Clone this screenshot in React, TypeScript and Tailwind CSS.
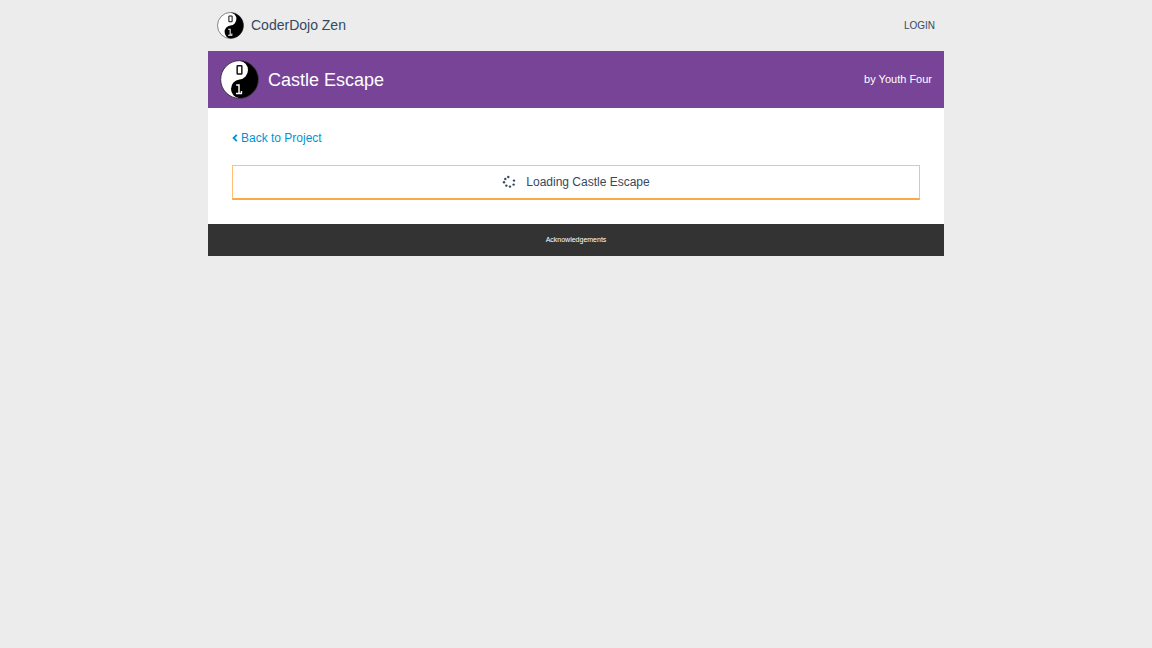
import React from "react";

function YinYang({ className }: { className: string }) {
  return (
    <svg viewBox="0 0 40 40" className={className} aria-hidden="true">
      <circle cx="20" cy="20" r="19.3" fill="#fff" />
      <path
        d="M20 .7a19.3 19.3 0 0 1 0 38.6a9.7 9.7 0 0 1 0-19.3a9.7 9.7 0 0 0 0-19.3z"
        fill="#000"
      />
      <circle cx="20" cy="20" r="19.3" fill="none" stroke="#222" strokeWidth=".8" />
      <rect x="17.6" y="5.8" width="4.8" height="8.6" rx=".6" fill="none" stroke="#111" strokeWidth="1.5" />
      <path d="M16.6 25.7h2.9v8.4M16.4 34.4h5.6v-2.6" fill="none" stroke="#fff" strokeWidth="1.5" />
    </svg>
  );
}

function Chevron() {
  return (
    <svg viewBox="0 0 6 8" className="h-2 w-1.5" aria-hidden="true">
      <path d="M4.8 .8L1.6 4l3.2 3.2" fill="none" stroke="currentColor" strokeWidth="1.9" />
    </svg>
  );
}

const dots = [
  [6.3, 2],
  [3.3, 4],
  [2, 7.3],
  [4.3, 10.6],
  [8, 11.6],
  [11.6, 9.6],
  [12, 5.6],
];

function Spinner() {
  return (
    <svg viewBox="0 0 14 14" className="size-3.5" aria-hidden="true">
      {dots.map(([x, y]) => (
        <circle key={`${x}-${y}`} cx={x} cy={y} r="1.2" fill="currentColor" />
      ))}
    </svg>
  );
}

export default function App() {
  return (
    <div className="min-h-screen bg-[#ececec] font-['Liberation_Sans',Arial,sans-serif] text-[#34495e]">
      <div className="mx-auto max-w-[736px]">
        <header className="flex items-center justify-between px-[9px] py-3">
          <a href="#home" className="flex items-center gap-[7px] text-sm">
            <YinYang className="size-[27px]" />
            <span className="pb-0.5">CoderDojo Zen</span>
          </a>
          <a href="#login" className="text-[10px]">LOGIN</a>
        </header>
        <section className="flex items-center justify-between bg-[#784498] px-3 py-[9px] text-white">
          <div className="flex items-center gap-[9px]">
            <YinYang className="size-[39px]" />
            <h1 className="text-lg">Castle Escape</h1>
          </div>
          <p className="text-[11px]">by Youth Four</p>
        </section>
        <main className="bg-white px-6 py-6">
          <a href="#project" className="flex w-fit items-center gap-[3px] text-xs leading-3 text-[#0093d5]">
            <Chevron />
            Back to Project
          </a>
          <div
            role="status"
            className="mt-[21px] flex items-center justify-center gap-2.5 border border-b-2 border-[#ffc07a] border-b-[#faa945] py-2 text-xs"
          >
            <Spinner />
            Loading Castle Escape
          </div>
        </main>
        <footer className="bg-[#333] py-2 text-center text-[7px] leading-4 text-white">
          <a href="#acknowledgements">Acknowledgements</a>
        </footer>
      </div>
    </div>
  );
}
